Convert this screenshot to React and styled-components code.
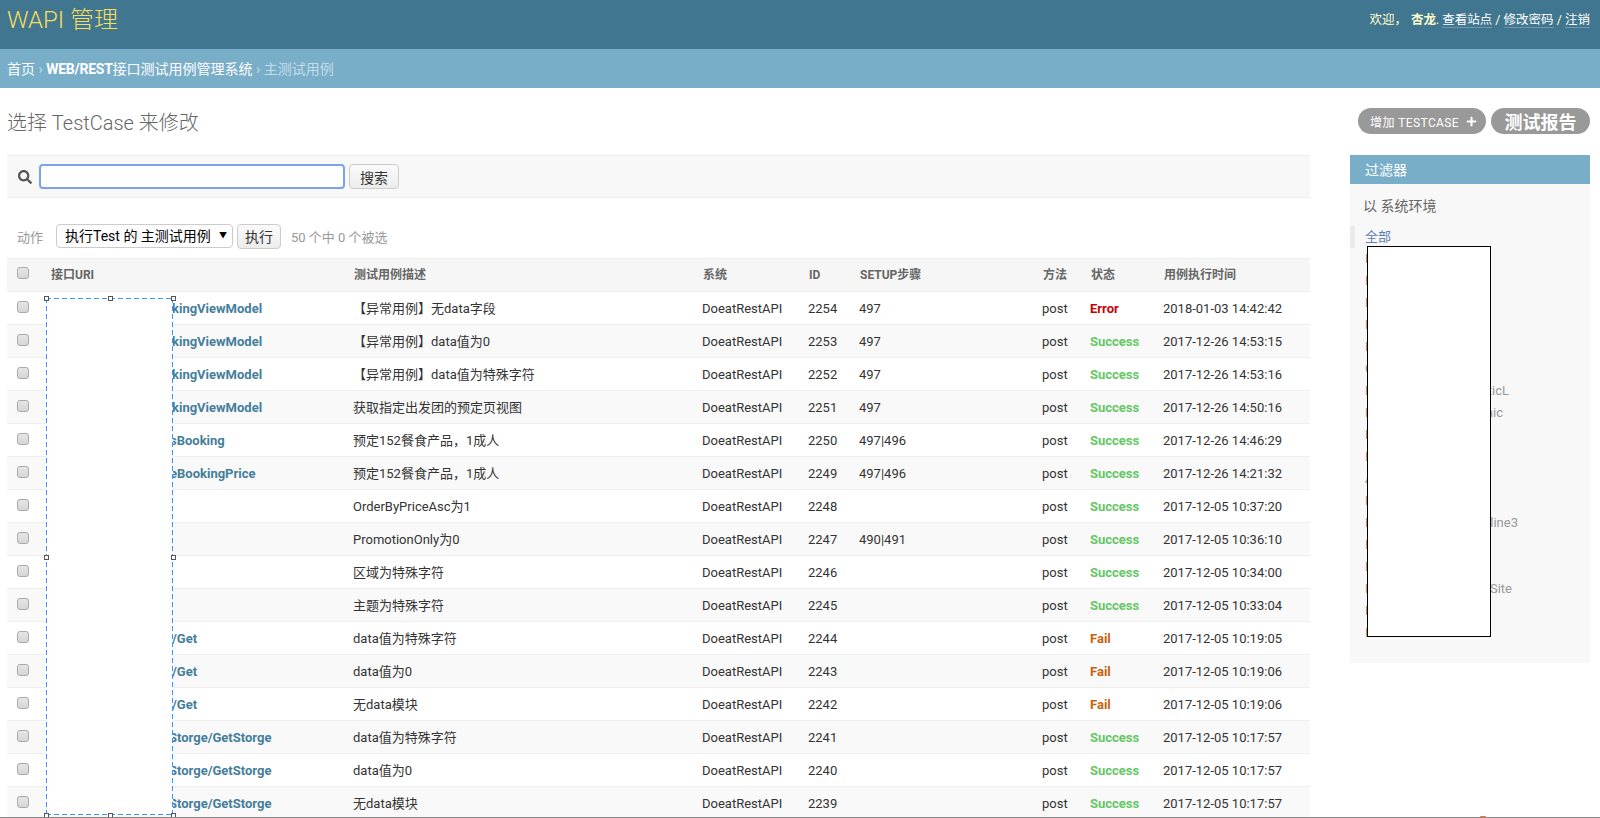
import React from 'react'
import styled, { createGlobalStyle } from 'styled-components'
import { FaSearch, FaPlus } from 'react-icons/fa'

const GlobalStyle = createGlobalStyle`
  html, body {
    margin: 0;
    padding: 0;
    background: #fff;
  }
  body {
    font-family: Roboto, "Noto Sans CJK SC", sans-serif;
    font-size: 13px;
    color: #333;
  }
`

const rows = [
  { uri: 'kingViewModel', desc: '【异常用例】无data字段', id: 2254, setup: '497', status: 'Error', time: '2018-01-03 14:42:42' },
  { uri: 'kingViewModel', desc: '【异常用例】data值为0', id: 2253, setup: '497', status: 'Success', time: '2017-12-26 14:53:15' },
  { uri: 'kingViewModel', desc: '【异常用例】data值为特殊字符', id: 2252, setup: '497', status: 'Success', time: '2017-12-26 14:53:16' },
  { uri: 'kingViewModel', desc: '获取指定出发团的预定页视图', id: 2251, setup: '497', status: 'Success', time: '2017-12-26 14:50:16' },
  { uri: 'sBooking', inset: 128, desc: '预定152餐食产品，1成人', id: 2250, setup: '497|496', status: 'Success', time: '2017-12-26 14:46:29' },
  { uri: 'eBookingPrice', inset: 128, desc: '预定152餐食产品，1成人', id: 2249, setup: '497|496', status: 'Success', time: '2017-12-26 14:21:32' },
  { uri: '', desc: 'OrderByPriceAsc为1', id: 2248, setup: '', status: 'Success', time: '2017-12-05 10:37:20' },
  { uri: '', desc: 'PromotionOnly为0', id: 2247, setup: '490|491', status: 'Success', time: '2017-12-05 10:36:10' },
  { uri: '', desc: '区域为特殊字符', id: 2246, setup: '', status: 'Success', time: '2017-12-05 10:34:00' },
  { uri: '', desc: '主题为特殊字符', id: 2245, setup: '', status: 'Success', time: '2017-12-05 10:33:04' },
  { uri: '/Get', desc: 'data值为特殊字符', id: 2244, setup: '', status: 'Fail', time: '2017-12-05 10:19:05' },
  { uri: '/Get', desc: 'data值为0', id: 2243, setup: '', status: 'Fail', time: '2017-12-05 10:19:06' },
  { uri: '/Get', desc: '无data模块', id: 2242, setup: '', status: 'Fail', time: '2017-12-05 10:19:06' },
  { uri: 'Storge/GetStorge', inset: 127, desc: 'data值为特殊字符', id: 2241, setup: '', status: 'Success', time: '2017-12-05 10:17:57' },
  { uri: 'Storge/GetStorge', inset: 127, desc: 'data值为0', id: 2240, setup: '', status: 'Success', time: '2017-12-05 10:17:57' },
  { uri: 'Storge/GetStorge', inset: 127, desc: '无data模块', id: 2239, setup: '', status: 'Success', time: '2017-12-05 10:17:57' },
]

const columns = [
  { title: '', width: 35 },
  { title: '接口URI', width: 303 },
  { title: '测试用例描述', width: 349 },
  { title: '系统', width: 106 },
  { title: 'ID', width: 51 },
  { title: 'SETUP步骤', width: 183 },
  { title: '方法', width: 48 },
  { title: '状态', width: 73 },
  { title: '用例执行时间', width: 155 },
]

const filterItems = [
  { lead: 'D' }, { lead: 'D' }, { lead: 'D' }, { lead: 'D' }, { lead: 'D' }, { lead: 'C' },
  { lead: 'D', tail: 'ticL', end: 144 },
  { lead: 'D', tail: 'nic', end: 138 },
  { lead: 'D' }, { lead: 'D' }, { lead: 'A' }, { lead: 'D' },
  { lead: 'D', tail: 'line3', end: 153 },
  { lead: 'D' }, { lead: 'D' },
  { lead: 'D', tail: 'Site', end: 147 },
  { lead: 'D' }, { lead: 'D' },
]

const statusColors = {
  Error: '#cc0000',
  Success: '#65c765',
  Fail: '#c8620e',
}

const handles = [
  ['0%', '0%'], ['50%', '0%'], ['100%', '0%'],
  ['0%', '50%'], ['100%', '50%'],
  ['0%', '100%'], ['50%', '100%'], ['100%', '100%'],
]

export default function App() {
  return (
    <Page>
      <GlobalStyle />
      <Header>
        <Branding>WAPI 管理</Branding>
        <UserTools>
          欢迎，<UserName>杏龙</UserName>.
          <UserLink>查看站点</UserLink> / <UserLink>修改密码</UserLink> / <UserLink>注销</UserLink>
        </UserTools>
      </Header>
      <Breadcrumbs>
        <a>首页</a> <Sep>›</Sep> <a><b>WEB/REST</b>接口测试用例管理系统</a> <Sep>›</Sep> 主测试用例
      </Breadcrumbs>
      <Content>
        <TitleRow>
          <Title>选择 TestCase 来修改</Title>
          <ObjectTools>
            <AddButton>增加 TESTCASE <FaPlus size={11} /></AddButton>
            <ReportButton>测试报告</ReportButton>
          </ObjectTools>
        </TitleRow>
        <ChangeList>
          <Main>
            <Toolbar>
              <FaSearch size={14} color="#555" />
              <SearchInput type="text" />
              <Button>搜索</Button>
            </Toolbar>
            <Actions>
              <ActionLabel>动作</ActionLabel>
              <SelectWrap>
                <ActionSelect defaultValue="run">
                  <option value="run">执行Test 的 主测试用例</option>
                </ActionSelect>
              </SelectWrap>
              <Button $small>执行</Button>
              <Counter>50 个中 0 个被选</Counter>
            </Actions>
            <Table>
              <colgroup>
                {columns.map((col, i) => <col key={i} width={col.width} />)}
              </colgroup>
              <thead>
                <tr>
                  {columns.map((col, i) => (
                    <Th key={i}>{i === 0 ? <Check type="checkbox" /> : col.title}</Th>
                  ))}
                </tr>
              </thead>
              <tbody>
                {rows.map(row => (
                  <Row key={row.id}>
                    <Td><Check type="checkbox" /></Td>
                    <UriCell $inset={row.inset}>{row.uri}</UriCell>
                    <Td>{row.desc}</Td>
                    <Td>DoeatRestAPI</Td>
                    <Td>{row.id}</Td>
                    <Td>{row.setup}</Td>
                    <Td>post</Td>
                    <StatusCell $status={row.status}>{row.status}</StatusCell>
                    <Td>{row.time}</Td>
                  </Row>
                ))}
              </tbody>
            </Table>
          </Main>
          <Filter>
            <FilterTitle>过滤器</FilterTitle>
            <FilterHeading>以 系统环境</FilterHeading>
            <FilterList>
              <FilterAll>全部</FilterAll>
              {filterItems.map((item, i) => (
                <FilterItem key={i}>
                  <FilterLead>{item.lead}</FilterLead>
                  {item.tail && <FilterTail $end={item.end}>{item.tail}</FilterTail>}
                </FilterItem>
              ))}
            </FilterList>
          </Filter>
        </ChangeList>
      </Content>

      <SelectionMask>
        {handles.map(([x, y]) => <Handle key={x + y} $x={x} $y={y} />)}
      </SelectionMask>
      <FilterMask />
      <BottomEdge><BottomMark /></BottomEdge>
    </Page>
  )
}

const Page = styled.div`
  position: relative;
  height: 818px;
  overflow: hidden;
`

const Header = styled.div`
  height: 49px;
  box-sizing: border-box;
  padding: 0 10px 0 7px;
  background: #417690;
  display: flex;
  align-items: flex-start;
  justify-content: space-between;
`
const Branding = styled.h1`
  margin: 4px 0 0;
  font-size: 24px;
  line-height: 32px;
  font-weight: 300;
  color: #f5dd5d;
`
const UserTools = styled.div`
  margin-top: 11px;
  font-size: 12.5px;
  line-height: 18px;
  color: #ffc;
`
const UserName = styled.strong`
  margin-left: 4px;
  font-weight: 700;
`
const UserLink = styled.a`
  color: #fff;
  border-bottom: 1px solid rgba(255, 255, 255, 0.25);
  &:first-of-type {
    margin-left: 3px;
  }
`

const Breadcrumbs = styled.div`
  height: 39px;
  box-sizing: border-box;
  padding: 0 7px;
  background: #79aec8;
  font-size: 14px;
  line-height: 41px;
  color: #c4dce8;
  a {
    color: #fff;
  }
  b {
    font-weight: 700;
    letter-spacing: -0.25px;
  }
`
const Sep = styled.span`
  color: #c4dce8;
`

const Content = styled.div`
  padding: 20px 10px 0 7px;
`
const TitleRow = styled.div`
  display: flex;
  align-items: center;
  justify-content: space-between;
  height: 26px;
  margin-bottom: 21px;
`
const Title = styled.h1`
  margin: 0;
  font-size: 20px;
  font-weight: 300;
  color: #666;
`
const ObjectTools = styled.div`
  display: flex;
  gap: 5px;
`
const Pill = styled.a`
  display: flex;
  align-items: center;
  height: 26px;
  box-sizing: border-box;
  border-radius: 15px;
  background: #999;
  color: #fff;
`
const AddButton = styled(Pill)`
  width: 128px;
  padding-left: 12px;
  gap: 7px;
  font-size: 12px;
  letter-spacing: 0.4px;
`
const ReportButton = styled(Pill)`
  width: 99px;
  justify-content: center;
  font-size: 18px;
  font-weight: 700;
`

const ChangeList = styled.div`
  display: flex;
  justify-content: space-between;
  align-items: flex-start;
`
const Main = styled.div`
  width: 1303px;
`
const Toolbar = styled.div`
  display: flex;
  align-items: center;
  height: 43px;
  box-sizing: border-box;
  padding-left: 11px;
  background: #f8f8f8;
  border-top: 1px solid #eee;
  border-bottom: 1px solid #eee;
`
const SearchInput = styled.input`
  width: 306px;
  height: 25px;
  box-sizing: border-box;
  margin: 0 4px 0 7px;
  background: #fff;
  border: 2px solid #7ca3e8;
  border-radius: 4px;
  outline: none;
`
const Button = styled.button`
  width: ${p => (p.$small ? '44px' : '50px')};
  height: 25px;
  padding: 0;
  font-family: inherit;
  font-size: 14px;
  color: #333;
  background: linear-gradient(#fbfbfb, #ececec);
  border: 1px solid #ccc;
  border-radius: 4px;
`

const Actions = styled.div`
  display: flex;
  align-items: center;
  height: 60px;
  box-sizing: border-box;
  padding: 16px 0 0 10px;
`
const ActionLabel = styled.span`
  width: 39px;
  color: #999;
`
const SelectWrap = styled.div`
  position: relative;
  margin-right: 4px;
  &::after {
    content: '▼';
    position: absolute;
    right: 6px;
    top: 6px;
    font-size: 8px;
    line-height: 12px;
    color: #000;
    pointer-events: none;
  }
`
const ActionSelect = styled.select`
  display: block;
  width: 177px;
  height: 24px;
  padding: 0 0 0 8px;
  appearance: none;
  font-family: inherit;
  font-size: 14px;
  color: #000;
  background: #fff;
  border: 1px solid #ccc;
  border-radius: 4px;
`
const Counter = styled.span`
  margin-left: 10px;
  color: #999;
`

const Table = styled.table`
  width: 1303px;
  table-layout: fixed;
  border-collapse: collapse;
`
const Th = styled.th`
  height: 33px;
  box-sizing: border-box;
  padding: 0 0 0 9px;
  text-align: left;
  vertical-align: middle;
  font-size: 12px;
  line-height: 16px;
  font-weight: 700;
  color: #666;
  background: #f6f6f6;
  border-top: 1px solid #eee;
  border-bottom: 1px solid #eee;
  &:first-child {
    padding-left: 10px;
  }
`
const Row = styled.tr`
  &:nth-child(even) td {
    background: #f9f9f9;
  }
`
const Td = styled.td`
  height: 33px;
  box-sizing: border-box;
  padding: 1px 0 0 8px;
  vertical-align: middle;
  line-height: 16px;
  white-space: nowrap;
  overflow: hidden;
  color: #333;
  border-bottom: 1px solid #eee;
  &:first-child {
    padding-left: 10px;
  }
`
const UriCell = styled(Td)`
  padding-left: ${p => p.$inset || 130}px;
  font-weight: 700;
  color: #447e9b;
`
const StatusCell = styled(Td)`
  font-weight: 700;
  color: ${p => statusColors[p.$status]};
`
const Check = styled.input`
  display: block;
  width: 12px;
  height: 12px;
  margin: -4px 0 0;
  appearance: none;
  background: linear-gradient(#e6e6e6, #d6d6d6);
  border: 1px solid #aaa;
  border-radius: 3px;
`

const Filter = styled.div`
  width: 240px;
  height: 508px;
  background: #f8f8f8;
`
const FilterTitle = styled.h2`
  margin: 0;
  height: 29px;
  padding-left: 15px;
  font-size: 14px;
  font-weight: 400;
  line-height: 30px;
  color: #fff;
  background: #79aec8;
`
const FilterHeading = styled.h3`
  margin: 12px 0 0 13px;
  font-size: 14px;
  font-weight: 400;
  line-height: 20px;
  color: #666;
`
const FilterList = styled.ul`
  margin: 10px 0 0;
  padding: 0;
  list-style: none;
`
const FilterItem = styled.li`
  display: flex;
  height: 22px;
  padding-left: 15px;
  line-height: 22px;
  color: #999;
`
const FilterAll = styled(FilterItem)`
  padding-left: 10px;
  border-left: 5px solid #eaeaea;
  color: #5b80b2;
`
const FilterLead = styled.span`
  width: 0;
  color: #a8907c;
`
const FilterTail = styled.span`
  width: ${p => p.$end}px;
  text-align: right;
`

const SelectionMask = styled.div`
  position: absolute;
  left: 46px;
  top: 298px;
  width: 127px;
  height: 517px;
  background-color: #fff;
  background-image:
    repeating-linear-gradient(90deg, #3a96ff 0 5px, transparent 5px 8px),
    repeating-linear-gradient(90deg, #3a96ff 0 5px, transparent 5px 8px),
    repeating-linear-gradient(0deg, #3a96ff 0 5px, transparent 5px 8px),
    repeating-linear-gradient(0deg, #3a96ff 0 5px, transparent 5px 8px);
  background-size: 100% 1px, 100% 1px, 1px 100%, 1px 100%;
  background-position: 0 0, 0 100%, 0 0, 100% 0;
  background-repeat: no-repeat;
`
const Handle = styled.i`
  position: absolute;
  left: ${p => p.$x};
  top: ${p => p.$y};
  width: 3px;
  height: 3px;
  margin: -2px 0 0 -2px;
  background: #fff;
  border: 1px solid #555;
`
const FilterMask = styled.div`
  position: absolute;
  left: 1367px;
  top: 246px;
  width: 122px;
  height: 389px;
  background: #fff;
  border: 1px solid #000;
`
const BottomEdge = styled.div`
  position: absolute;
  left: 0;
  right: 0;
  bottom: 0;
  height: 1px;
  background: #888;
`
const BottomMark = styled.i`
  position: absolute;
  left: 1480px;
  top: -1px;
  width: 6px;
  height: 1px;
  border-radius: 3px 3px 0 0;
  background: #f0703a;
`
